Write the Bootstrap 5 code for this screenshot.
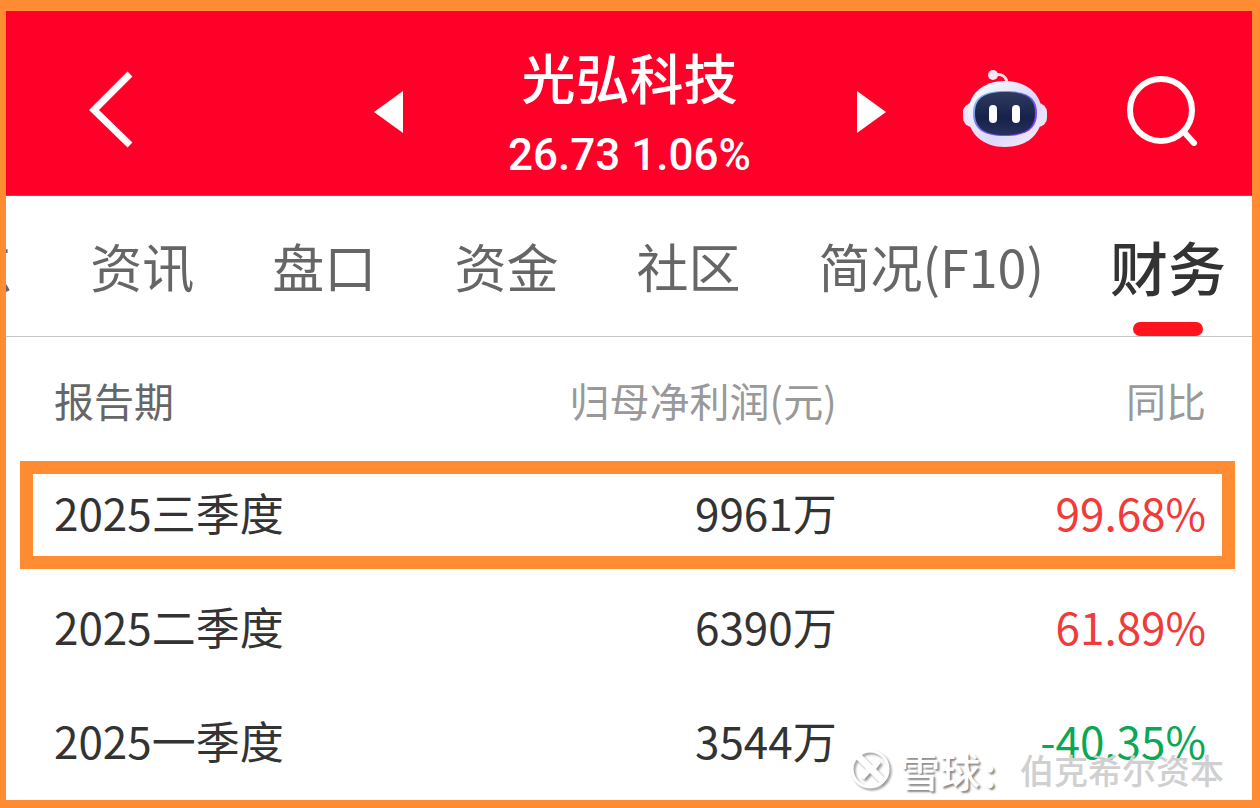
<!DOCTYPE html>
<html lang="zh-CN">
<head>
<meta charset="utf-8">
<meta name="viewport" content="width=device-width, initial-scale=1">
<title>光弘科技 财务</title>
<link href="https://cdn.jsdelivr.net/npm/bootstrap@5.3.0/dist/css/bootstrap.min.css" rel="stylesheet">
<style>
:root { --frame: #ff8c32; --brand: #ff0029; }
body { font-family: "Noto Sans CJK SC", sans-serif; color: #333; }
.page-frame { border: solid var(--frame); border-width: 11px 8px 8px 6px; min-height: 100vh; }
.top-bar { display: grid; grid-template-columns: 1fr auto 1fr; height: 185px; padding: 18px 53px 0 76px; background: var(--brand); border-bottom: 1px solid #d8384f; }
.top-bar .btn { --bs-btn-border-width: 0; }
.switcher { width: 512px; margin-left: -22px; }
.tools { gap: 77px; }
.stock-name { font-size: 54px; line-height: 72px; font-weight: 500; }
.stock-price { font-family: Roboto, sans-serif; font-size: 44px; line-height: 64px; font-weight: 500; margin-top: 10px; }
.tab-strip { height: 141px; border-bottom: 1px solid #c4c4c4; gap: 78px; padding-right: 26px; }
.tab-strip .nav-link { font-size: 52px; line-height: 72px; color: #666; padding: 34px 0 0; white-space: nowrap; }
.tab-strip .current { font-size: 58px; font-weight: 500; color: #333; position: relative; margin-left: -12px; height: 140px; }
.tab-strip .current::after { content: ""; position: absolute; bottom: 0; left: 50%; width: 70px; height: 14px; margin-left: -35px; border-radius: 7px; background: #ff131d; }
.report-table { width: 100%; table-layout: fixed; font-size: 44px; line-height: 64px; }
.report-table th, .report-table td { padding: 24px 0 26px; font-weight: 400; height: 114px; }
.report-table thead th { font-size: 40px; line-height: 56px; padding: 35px 0 28px; height: 119px; color: #999; }
.report-table thead th:first-child { color: #666; }
.report-table th:first-child { padding-left: 48px; }
.report-table th:last-child, .report-table td:last-child { padding-right: 46px; }
.picked { position: relative; }
.picked th::after { content: ""; position: absolute; inset: 5px 17px 1px 14px; border: 13px solid var(--frame); }
.rise { color: #f23a3a; }
.fall { color: #0aa854; }
.source-mark { position: absolute; right: 28px; bottom: 6px; line-height: 48px; color: #fff; }
.source-mark .logo { filter: drop-shadow(2px 2px 1px #999); }
.source-mark .site { font-size: 40px; font-weight: 500; text-shadow: 2px 2px 2px #888; }
.source-mark .author { font-size: 34px; font-weight: 500; color: #d0d0d0; }
</style>
</head>
<body>
<div class="page-frame position-relative overflow-hidden">
  <header class="top-bar align-items-center text-white">
    <button class="btn p-0 text-start mb-1" type="button" aria-label="返回">
      <svg width="52" height="80" viewBox="0 0 52 80" fill="none" stroke="#fff" stroke-width="7"><path d="M48 4 12 40l36 35"/></svg>
    </button>
    <div class="switcher d-flex align-items-center justify-content-between">
      <button class="btn p-0" type="button" aria-label="上一只"><svg width="29" height="42" viewBox="0 0 29 42" fill="#fff"><path d="M29 0v42L0 21z"/></svg></button>
      <div class="text-center pt-1">
        <h1 class="stock-name mb-0">光弘科技</h1>
        <div class="stock-price">26.73 1.06%</div>
      </div>
      <button class="btn p-0" type="button" aria-label="下一只"><svg width="29" height="42" viewBox="0 0 29 42" fill="#fff"><path d="M0 0v42l29-21z"/></svg></button>
    </div>
    <div class="tools d-flex justify-content-end align-items-center mb-1">
      <button class="btn p-0" type="button" aria-label="智能助手">
        <svg width="86" height="80" viewBox="0 0 86 80">
          <defs>
            <linearGradient id="shell" x1="0" y1="0" x2="1" y2="1"><stop offset="0" stop-color="#fff"/><stop offset=".6" stop-color="#dcd8fb"/><stop offset="1" stop-color="#f8eef8"/></linearGradient>
            <linearGradient id="rim" x1="0" y1="0" x2="1" y2="1"><stop offset="0" stop-color="#8fe4ee"/><stop offset=".5" stop-color="#6a5be8"/><stop offset="1" stop-color="#8a35e0"/></linearGradient>
            <linearGradient id="face" x1="0" y1="0" x2="0" y2="1"><stop offset="0" stop-color="#2f3a5e"/><stop offset=".6" stop-color="#16224a"/><stop offset="1" stop-color="#26325c"/></linearGradient>
          </defs>
          <path d="M32 5c8-2 13 2 13 9" fill="none" stroke="#f8dfe8" stroke-width="3"/>
          <circle cx="31" cy="5" r="5" fill="#f3e6f6"/>
          <rect x="1" y="33" width="84" height="24" rx="9" fill="#ece2f8"/>
          <path d="M43 11c22 0 37 13 37 33S65 77 43 77 6 64 6 44s15-33 37-33z" fill="url(#shell)"/>
          <path d="M43 21c23 0 32 7 32 22S66 66 43 66 11 58 11 43s9-22 32-22z" fill="url(#rim)"/>
          <path d="M43 22c22 0 30 7 30 21S65 65 43 65 13 57 13 43s8-21 30-21z" fill="url(#face)"/>
          <rect x="27" y="35" width="8" height="18" rx="4" fill="#fff"/><rect x="50" y="35" width="8" height="18" rx="4" fill="#fff"/>
        </svg>
      </button>
      <button class="btn p-0" type="button" aria-label="搜索">
        <svg width="74" height="72" viewBox="0 0 74 72" fill="none" stroke="#fff" stroke-width="6" stroke-linecap="round"><circle cx="36" cy="36" r="31"/><path d="m59 58 10 11"/></svg>
      </button>
    </div>
  </header>
  <nav class="tab-strip d-flex justify-content-end overflow-hidden" aria-label="个股栏目">
    <a class="nav-link" href="#">热点</a>
    <a class="nav-link" href="#">资讯</a>
    <a class="nav-link" href="#">盘口</a>
    <a class="nav-link" href="#">资金</a>
    <a class="nav-link" href="#">社区</a>
    <a class="nav-link" href="#">简况(F10)</a>
    <a class="nav-link current" href="#" aria-current="page">财务</a>
  </nav>
  <table class="report-table">
    <thead><tr><th scope="col">报告期</th><th scope="col" class="text-end">归母净利润(元)</th><th scope="col" class="text-end">同比</th></tr></thead>
    <tbody>
      <tr class="picked"><th scope="row">2025三季度</th><td class="text-end">9961万</td><td class="text-end rise">99.68%</td></tr>
      <tr><th scope="row">2025二季度</th><td class="text-end">6390万</td><td class="text-end rise">61.89%</td></tr>
      <tr><th scope="row">2025一季度</th><td class="text-end">3544万</td><td class="text-end fall">-40.35%</td></tr>
    </tbody>
  </table>
  <div class="source-mark d-flex align-items-center">
    <svg class="logo me-2" width="42" height="42" viewBox="0 0 42 42" fill="none" stroke="#fff"><circle cx="20" cy="20" r="18" stroke-width="3"/><path d="M8 7 34 33" stroke-width="7"/><path d="m12 29 8-9M29 12l-6 8" stroke-width="5"/></svg>
    <span class="site">雪球</span><span class="site ms-1 me-4">:</span><span class="author">伯克希尔资本</span>
  </div>
</div>
<script src="https://cdn.jsdelivr.net/npm/bootstrap@5.3.0/dist/js/bootstrap.bundle.min.js"></script>
</body>
</html>
